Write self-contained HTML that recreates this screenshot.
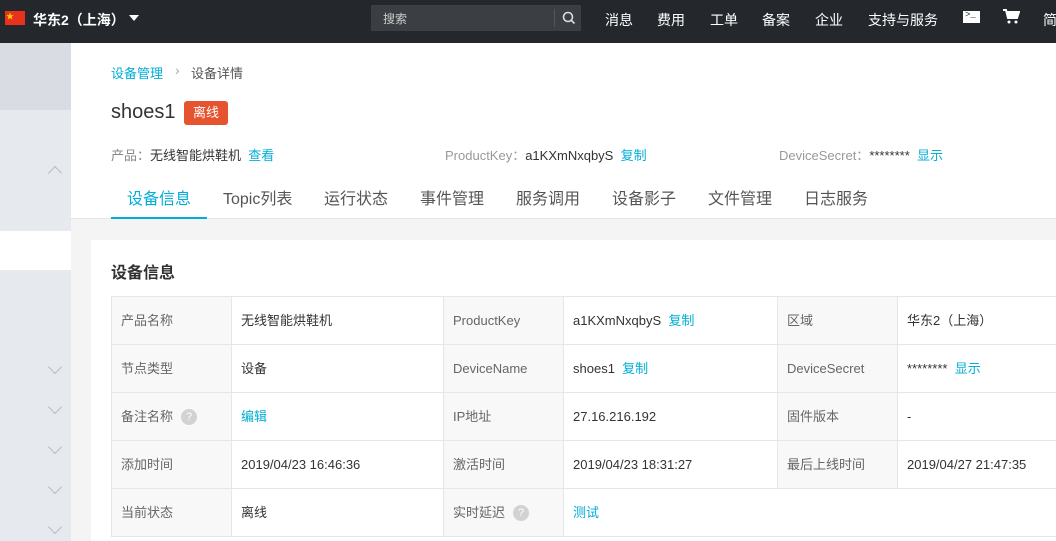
<!DOCTYPE html>
<html><head><meta charset="utf-8"><style>
*{margin:0;padding:0;box-sizing:border-box}
body{width:1056px;height:541px;overflow:hidden;position:relative;font-family:"Liberation Sans","Noto Sans CJK SC",sans-serif;background:#f4f4f4;color:#333}
.a{position:absolute;white-space:nowrap}
.top{left:0;top:0;width:1056px;height:43px;background:#24282d}
.w{color:#fff;font-size:14px}
.blue{color:#00aed6}
table{position:absolute;left:111px;top:296px;width:945px;table-layout:fixed;border-collapse:collapse;font-size:13px}
td{height:48px;border:1px solid #e6e6e6;padding:0 0 0 9px;color:#333;vertical-align:middle;white-space:nowrap;overflow:hidden;line-height:18px}
td span{line-height:18px}
td.l{background:#f8f8f9;color:#666}
.q{display:inline-block;width:16px;height:16px;border-radius:8px;background:#d2d2d2;color:#fff;font-size:11px;text-align:center;line-height:16px !important;vertical-align:middle;margin-left:8px}
.tab{font-size:16px;color:#555;top:185px}
.chev{position:absolute;left:50px;width:10px;height:10px;border-right:1px solid #b8bcc2;border-bottom:1px solid #b8bcc2;transform:rotate(45deg)}
</style></head><body>
<div class="a top"></div>
<div class="a" style="left:5px;top:11px;width:20px;height:14px;background:#e8321e"></div>
<div class="a" style="left:6px;top:11px;color:#ffd700;font-size:8px">★</div>
<div class="a w" style="left:33px;top:10px;font-weight:bold">华东2（上海）</div>
<div class="a" style="left:129px;top:15px;width:0;height:0;border-left:5px solid transparent;border-right:5px solid transparent;border-top:6px solid #fff"></div>
<div class="a" style="left:371px;top:5px;width:210px;height:26px;background:#3b3f44"></div>
<div class="a" style="left:383px;top:10px;color:#ccc;font-size:12px">搜索</div>
<div class="a" style="left:554px;top:9px;width:1px;height:18px;background:#555"></div>
<svg class="a" style="left:562px;top:11px" width="14" height="14" viewBox="0 0 14 14"><circle cx="6" cy="6" r="4.5" stroke="#ddd" stroke-width="1.6" fill="none"/><line x1="9.3" y1="9.3" x2="12.5" y2="12.5" stroke="#ddd" stroke-width="1.6"/></svg>
<div class="a w" style="left:605px;top:10px">消息</div>
<div class="a w" style="left:657px;top:10px">费用</div>
<div class="a w" style="left:710px;top:10px">工单</div>
<div class="a w" style="left:762px;top:10px">备案</div>
<div class="a w" style="left:815px;top:10px">企业</div>
<div class="a w" style="left:868px;top:10px">支持与服务</div>
<div class="a" style="left:963px;top:11px;width:17px;height:12px;background:#fff"></div>
<div class="a" style="left:965px;top:10px;color:#24282d;font-size:9px;font-family:'Liberation Mono'">&gt;_</div>
<svg class="a" style="left:1003px;top:9px" width="17" height="15" viewBox="0 0 17 15"><path d="M0 1h3l2 8h9l2-6H4" stroke="#fff" stroke-width="2" fill="#fff"/><circle cx="6" cy="13" r="1.5" fill="#fff"/><circle cx="13" cy="13" r="1.5" fill="#fff"/></svg>
<div class="a w" style="left:1043px;top:10px">简</div>

<div class="a" style="left:0;top:43px;width:71px;height:67px;background:#d9dde3"></div>
<div class="a" style="left:0;top:110px;width:71px;height:431px;background:#e6e9ee"></div>
<div class="a" style="left:0;top:231px;width:71px;height:39px;background:#fff"></div>
<div class="chev" style="top:168px;transform:rotate(225deg)"></div>
<div class="chev" style="top:362px"></div>
<div class="chev" style="top:402px"></div>
<div class="chev" style="top:442px"></div>
<div class="chev" style="top:482px"></div>
<div class="chev" style="top:522px"></div>

<div class="a" style="left:71px;top:43px;width:985px;height:176px;background:#fff;border-bottom:1px solid #e6e6e6"></div>
<div class="a blue" style="left:111px;top:63px;font-size:13px">设备管理</div>
<div class="a" style="left:175px;top:62px;font-size:14px;color:#aaa">›</div>
<div class="a" style="left:191px;top:63px;font-size:13px;color:#555">设备详情</div>
<div class="a" style="left:111px;top:101px;font-size:20px;color:#333">shoes1</div>
<div class="a" style="left:184px;top:101px;width:44px;height:24px;background:#e5532f;border-radius:3px;color:#fff;font-size:13px;text-align:center;line-height:24px">离线</div>
<div class="a" style="left:111px;top:145px;font-size:13px;color:#888">产品：<span style="color:#333">无线智能烘鞋机</span> <span class="blue">&nbsp;查看</span></div>
<div class="a" style="left:445px;top:145px;font-size:13px;color:#999">ProductKey：<span style="color:#333">a1KXmNxqbyS</span> <span class="blue">&nbsp;复制</span></div>
<div class="a" style="left:779px;top:145px;font-size:13px;color:#999">DeviceSecret：<span style="color:#333">********</span> <span class="blue">&nbsp;显示</span></div>
<div class="a tab" style="left:127px;color:#00aed6">设备信息</div>
<div class="a" style="left:111px;top:217px;width:96px;height:2px;background:#00aed6"></div>
<div class="a tab" style="left:223px">Topic列表</div>
<div class="a tab" style="left:324px">运行状态</div>
<div class="a tab" style="left:420px">事件管理</div>
<div class="a tab" style="left:516px">服务调用</div>
<div class="a tab" style="left:612px">设备影子</div>
<div class="a tab" style="left:708px">文件管理</div>
<div class="a tab" style="left:804px">日志服务</div>

<div class="a" style="left:91px;top:240px;width:965px;height:301px;background:#fff"></div>
<div class="a" style="left:111px;top:259px;font-size:16px;font-weight:bold;color:#333">设备信息</div>
<table>
<colgroup><col style="width:120px"><col style="width:212px"><col style="width:120px"><col style="width:214px"><col style="width:120px"><col style="width:159px"></colgroup>
<tr><td class="l">产品名称</td><td>无线智能烘鞋机</td><td class="l">ProductKey</td><td>a1KXmNxqbyS <span class="blue">&nbsp;复制</span></td><td class="l">区域</td><td>华东2（上海）</td></tr>
<tr><td class="l">节点类型</td><td>设备</td><td class="l">DeviceName</td><td>shoes1 <span class="blue">&nbsp;复制</span></td><td class="l">DeviceSecret</td><td>******** <span class="blue">&nbsp;显示</span></td></tr>
<tr><td class="l">备注名称<span class="q">?</span></td><td class="blue">编辑</td><td class="l">IP地址</td><td>27.16.216.192</td><td class="l">固件版本</td><td>-</td></tr>
<tr><td class="l">添加时间</td><td>2019/04/23 16:46:36</td><td class="l">激活时间</td><td>2019/04/23 18:31:27</td><td class="l">最后上线时间</td><td>2019/04/27 21:47:35</td></tr>
<tr><td class="l">当前状态</td><td>离线</td><td class="l">实时延迟<span class="q">?</span></td><td colspan="3" class="blue">测试</td></tr>
</table>
</body></html>
